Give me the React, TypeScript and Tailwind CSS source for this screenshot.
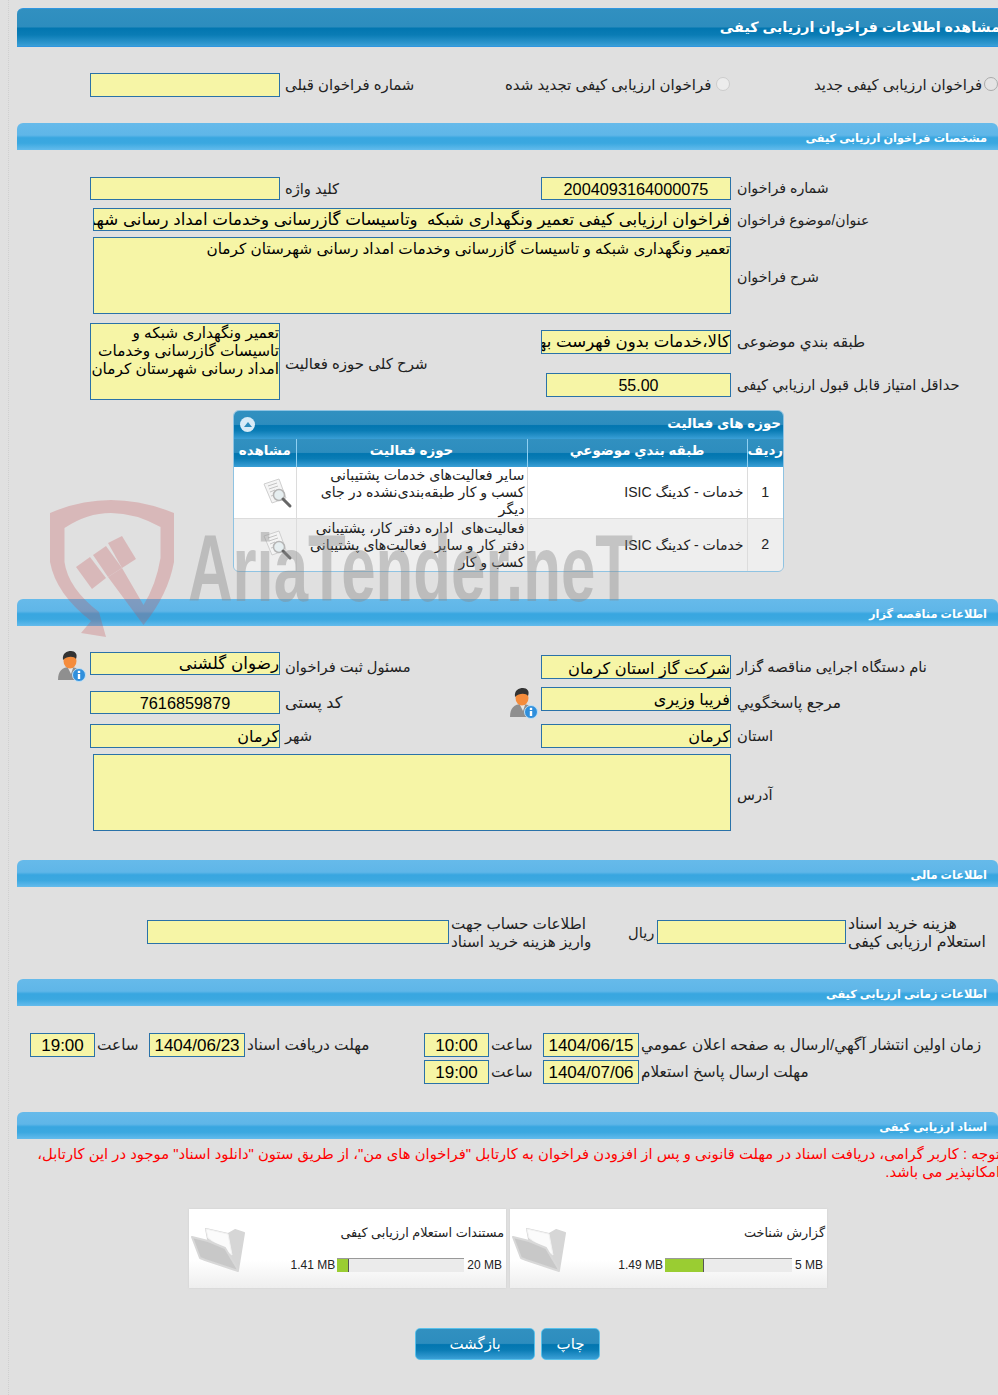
const font = "[font-family:'Liberation_Sans','DejaVu_Sans',sans-serif]";
const field = "bg-[#f6f5a6] border border-[#2a72a8] text-black";
const heavyBar = "bg-[linear-gradient(#3190c0_0%,#2d8dbe_48%,#0276b0_52%,#0a7cb5_70%,#3a9fd6_100%)]";
const lightBar = "bg-[linear-gradient(#66baea_0%,#5fb6e8_45%,#38a6e0_55%,#3ba8e0_75%,#63bbec_100%)]";

function Field({ className, children }: { className: string; children?: React.ReactNode }) {
  return (
    <div dir="rtl" className={`${field} overflow-hidden whitespace-nowrap leading-[22px] ${className}`}>
      {children}
    </div>
  );
}

function Label({ className, size = "text-[14.7px]", children }: { className: string; size?: string; children: React.ReactNode }) {
  return (
    <div dir="rtl" className={`text-left text-[#222] whitespace-nowrap ${size} ${className}`}>
      {children}
    </div>
  );
}

function SectionBar({ title, className }: { title: string; className: string }) {
  return (
    <div className={`ml-[17px] h-[27px] rounded-tl-[6px] rounded-tr-[6px] ${lightBar} flex items-center justify-end pr-[11px] ${className}`}>
      <span dir="rtl" className="text-[11.3px] font-bold text-white pt-[3px]">{title}</span>
    </div>
  );
}

function PersonIcon() {
  return (
    <svg width="30" height="32" viewBox="0 0 30 32">
      <path d="M2 30c0-9 4-13 12-13s11 4 11 13z" fill="#8f8f8f" />
      <path d="M12 18l3 6 2-6z" fill="#e8e8e8" />
      <ellipse cx="14" cy="11" rx="6.5" ry="7.5" fill="#f58c3c" />
      <path d="M7 10c-1-7 4-9 8-9s7 3 5 8c-2-3-9-3-13 1z" fill="#333" />
      <circle cx="23" cy="25" r="6.5" fill="#2f8fdc" stroke="#bfe0f7" strokeWidth="1" />
      <rect x="21.8" y="24" width="2.4" height="5" fill="#fff" />
      <rect x="21.8" y="20.8" width="2.4" height="2.2" fill="#fff" />
    </svg>
  );
}

function DocSearchIcon() {
  return (
    <svg width="32" height="32" viewBox="0 0 32 32">
      <path d="M2 7l15-5 7 19-14 5z" fill="#f4f4f4" stroke="#cfcfcf" />
      <path d="M6 9l9-3M7 12l9-3M8 15l5-2M9 19l4-1" stroke="#c4c4c4" strokeWidth="1" />
      <circle cx="17" cy="18" r="5.5" fill="#e6eef0" stroke="#b5b5b5" strokeWidth="1.5" />
      <path d="M21 22l7 7" stroke="#666" strokeWidth="3" strokeLinecap="round" />
    </svg>
  );
}

function FolderIcon() {
  return (
    <svg width="62" height="56" viewBox="0 0 62 56" className="blur-[0.5px]">
      <path d="M17 5l22 5 7-4 9 3-6 37L20 20z" fill="#d6d6d6" stroke="#d6d6d6" strokeLinejoin="round" strokeWidth="2" />
      <path d="M17 5l22 5 4 21-24-17z" fill="#fbfbfb" stroke="#f2f2f2" strokeLinejoin="round" strokeWidth="1" />
      <path d="M3 13l16 4 17 7 12 20 1 3-33-11-5-2z" fill="#c8c8c8" stroke="#d8d8d8" strokeLinejoin="round" strokeWidth="2" />
    </svg>
  );
}

function Quota({ used, total, percent, title }: { used: string; total: string; percent: string; title: string }) {
  return (
    <div className="w-[317px] h-[79px] flex bg-[linear-gradient(#fff_0%,#fff_65%,#eeeeee_100%)] shadow-[0_0_2px_#ccc]">
      <div className="w-[62px] shrink-0 pt-[15px]"><FolderIcon /></div>
      <div className="flex-1 pr-[2px]">
        <div dir="rtl" className="text-[12.8px] text-[#222] mt-[14px] h-[22px]">{title}</div>
        <div className="flex items-center justify-end mt-[11px] pr-[2px] text-[12px] text-[#222] gap-[2px]">
          <span>{used}</span>
          <div className="w-[127px] h-[14px] bg-[#ebebeb] border-t border-t-[#999]">
            <div className={`h-full bg-[#9acd32] border-r border-r-[#555] ${percent}`} />
          </div>
          <span className="ml-[1px]">{total}</span>
        </div>
      </div>
    </div>
  );
}

function Button({ className, children }: { className: string; children: string }) {
  return (
    <div className={`h-[32px] rounded-[5px] border border-[#58c0ea] ${heavyBar} text-white text-[15px] flex items-center justify-center ${className}`}>
      {children}
    </div>
  );
}

export default function App() {
  const rows = [
    ["1", "خدمات - کدینگ ISIC", "سایر فعالیت‌های خدمات پشتیبانی کسب و کار طبقه‌بندی‌نشده در جای دیگر", "bg-white h-[51px]"],
    ["2", "خدمات - کدینگ ISIC", "فعالیت‌های\u00a0 اداره دفتر کار، پشتیبانی دفتر کار و سایر\u00a0 فعالیت‌های پشتیبانی کسب و کار", "bg-[#eeeeee] h-[53px]"],
  ];

  return (
    <div className={`relative w-[998px] h-[1395px] overflow-hidden bg-[#e0e0e0] pt-[8px] text-[14px] ${font}`}>
      <div className="absolute left-[8px] top-0 bottom-0 border-l border-dotted border-[#cfcfcf]" />

      <div className={`relative ml-[17px] h-[39px] rounded-tl-[6px] border-y border-[#2f96e0] ${heavyBar} flex items-center justify-end`}>
        <span dir="rtl" className="text-[14.3px] font-bold text-white whitespace-nowrap -mr-[2px]">مشاهده اطلاعات فراخوان ارزیابی کیفی</span>
      </div>

      {/* نوع فراخوان */}
      <div className="relative mt-[26px] h-[24px] flex items-center">
        <Field className="ml-[90px] w-[190px] h-[24px]" />
        <Label size="text-[14.9px]" className="ml-[5px] w-[220px] pt-[1px]">شماره فراخوان قبلی</Label>
        <Label size="text-[15px]" className="w-[211px] pt-[1px]">فراخوان ارزیابی کیفی تجدید شده</Label>
        <span className="w-[14px] h-[14px] rounded-full bg-[#ececec] border border-[#ccc] -mt-[2px]" />
        <Label size="text-[14.9px]" className="ml-[84px] w-[170px] pt-[1px]">فراخوان ارزیابی کیفی جدید</Label>
        <span className="w-[14px] h-[14px] rounded-full bg-[#e4e4e4] border border-[#aaa] -mt-[2px]" />
      </div>

      <SectionBar title="مشخصات فراخوان ارزیابی کیفی" className="relative mt-[26px]" />

      <div className="relative mt-[27px] h-[23px] flex items-center">
        <Field className="ml-[90px] w-[190px] h-[23px]" />
        <Label className="ml-[5px] w-[256px] pt-[1px]">کلید واژه</Label>
        <Field className="w-[190px] h-[23px] text-center text-[16.3px]"><span dir="ltr">2004093164000075</span></Field>
        <Label size="text-[14.2px]" className="ml-[6px] pt-[1px]">شماره فراخوان</Label>
      </div>

      <div className="relative mt-[8px] h-[23px] flex items-center">
        <Field className="ml-[93px] w-[638px] h-[23px] text-[16.7px]">فراخوان ارزیابی کیفی تعمیر ونگهداری شبکه{"\u00a0 "}وتاسیسات گازرسانی وخدمات امداد رسانی شهرستان کرمان</Field>
        <Label size="text-[14px]" className="ml-[6px] pt-[1px]">عنوان/موضوع فراخوان</Label>
      </div>

      <div className="relative mt-[6px] h-[77px] flex items-center">
        <Field className="ml-[93px] w-[638px] h-[77px] text-[15.3px] leading-[19px]">تعمیر ونگهداری شبکه و تاسیسات گازرسانی وخدمات امداد رسانی شهرستان کرمان</Field>
        <Label size="text-[14.2px]" className="ml-[6px] pt-[5px]">شرح فراخوان</Label>
      </div>

      <div className="relative mt-[9px] h-[77px] flex">
        <div dir="rtl" className={`${field} ml-[90px] w-[190px] h-[77px] text-[15.3px] leading-[18px] text-right overflow-hidden`}>تعمیر ونگهداری شبکه و تاسیسات گازرسانی وخدمات امداد رسانی شهرستان کرمان</div>
        <Label size="text-[15px]" className="ml-[5px] w-[256px] leading-[82px]">شرح کلی حوزه فعالیت</Label>
        <div className="flex flex-col pt-[7px]">
          <div className="flex items-center h-[24px]">
            <Field className="w-[190px] h-[24px] text-[16.6px]">کالا،خدمات بدون فهرست بها</Field>
            <Label size="text-[15.2px]" className="ml-[6px]">طبقه بندي موضوعی</Label>
          </div>
          <div className="flex items-center h-[24px] mt-[19px]">
            <Field className="ml-[5px] w-[185px] h-[24px] pt-[1px] text-center text-[16px]"><span dir="ltr">55.00</span></Field>
            <Label className="ml-[6px]">حداقل امتیاز قابل قبول ارزیابي کیفی</Label>
          </div>
        </div>
      </div>

      {/* حوزه های فعالیت */}
      <div className="relative mt-[10px] ml-[233px] w-[551px] h-[162px] rounded-[6px] border border-[#8fc3e2] overflow-hidden">
        <div className={`h-[28px] ${heavyBar} flex items-center justify-between px-[6px] pb-[2px]`}>
          <span className="w-[15px] h-[15px] rounded-full bg-[#d8ebf7] flex items-center justify-center">
            <span className="border-x-[4px] border-x-transparent border-b-[5px] border-b-[#2d8dbe]" />
          </span>
          <span dir="rtl" className="text-[13.4px] font-bold text-white -mr-[4px]">حوزه های فعالیت</span>
        </div>
        <table dir="rtl" className="w-full table-fixed border-collapse text-[14.2px] text-[#222]">
          <thead>
            <tr className={`h-[28px] ${heavyBar} text-white text-[13.4px] font-bold`}>
              <th className="w-[36px] border-l border-[#8fd0f2] font-bold pb-[3px]">ردیف</th>
              <th className="w-[220px] border-l border-[#8fd0f2] font-bold pb-[3px]">طبقه بندي موضوعي</th>
              <th className="w-[231px] border-l border-[#8fd0f2] font-bold pb-[3px]">حوزه فعالیت</th>
              <th className="font-bold pb-[3px]">مشاهده</th>
            </tr>
          </thead>
          <tbody>
            {rows.map((r) => (
              <tr key={r[0]} className={`${r[3]} border-b border-[#dcdcdc]`}>
                <td className="text-center border-l border-[#dcdcdc]">{r[0]}</td>
                <td className="pr-[3px] border-l border-[#dcdcdc] text-[14px]">{r[1]}</td>
                <td className="px-[2px] leading-[17px] border-l border-[#dcdcdc]">{r[2]}</td>
                <td><div className="flex justify-end pl-[28px]"><DocSearchIcon /></div></td>
              </tr>
            ))}
          </tbody>
        </table>
      </div>

      <SectionBar title="اطلاعات مناقصه گزار" className="relative mt-[27px]" />

      <div className="relative mt-[26px] h-[26px] flex">
        <div className="ml-[56px] w-[34px] -mt-[2px]"><PersonIcon /></div>
        <Field className="w-[190px] h-[23px] text-[16.8px]">رضوان گلشنی</Field>
        <Label className="ml-[5px] w-[256px] leading-[30px]">مسئول ثبت فراخوان</Label>
        <Field className="w-[190px] h-[24px] mt-[3px] pt-[1px] text-[16.2px]">شرکت گاز استان کرمان</Field>
        <Label className="ml-[6px] leading-[30px]">نام دستگاه اجرایی مناقصه گزار</Label>
      </div>

      <div className="relative mt-[9px] h-[28px] flex">
        <Field className="ml-[90px] w-[190px] h-[23px] mt-[4px] text-center text-[16.3px]"><span dir="ltr">7616859879</span></Field>
        <Label size="text-[16px]" className="ml-[5px] w-[223px] leading-[32px]">کد پستی</Label>
        <div className="w-[33px]"><PersonIcon /></div>
        <Field className="w-[190px] h-[24px] pt-[1px] text-[16px]">فریبا وزیری</Field>
        <Label size="text-[15.4px]" className="ml-[6px] leading-[32px]">مرجع پاسخگویي</Label>
      </div>

      <div className="relative mt-[9px] h-[24px] flex items-center">
        <Field className="ml-[90px] w-[190px] h-[24px] pt-[1px] text-[16px]">کرمان</Field>
        <Label className="ml-[5px] w-[256px]">شهر</Label>
        <Field className="w-[190px] h-[24px] pt-[1px] text-[16px]">کرمان</Field>
        <Label className="ml-[6px]">استان</Label>
      </div>

      <div className="relative mt-[6px] h-[77px] flex items-center">
        <Field className="ml-[93px] w-[638px] h-[77px]" />
        <Label className="ml-[6px] pt-[5px]">آدرس</Label>
      </div>

      <SectionBar title="اطلاعات مالی" className="relative mt-[29px]" />

      <div className="relative mt-[27px] h-[36px] flex items-center">
        <Field className="ml-[147px] w-[302px] h-[24px]" />
        <Label size="text-[15.2px]" className="ml-[2px] w-[177px] pt-[2px] leading-[18px]">اطلاعات حساب جهت<br />واریز هزینه خرید اسناد</Label>
        <Label className="w-[29px] pt-[2px]">ریال</Label>
        <Field className="w-[189px] h-[24px]" />
        <Label size="text-[15.8px]" className="ml-[2px] pt-[2px] leading-[18px]">هزینه خرید اسناد<br />استعلام ارزیابی کیفی</Label>
      </div>

      <SectionBar title="اطلاعات زمانی ارزیابی کیفی" className="relative mt-[29px]" />

      <div className="relative mt-[27px] h-[24px] flex items-center">
        <Field className="ml-[30px] w-[65px] h-[24px] pt-[1px] text-center text-[17px]"><span dir="ltr">19:00</span></Field>
        <Label size="text-[15.3px]" className="ml-[2px] w-[52px] pt-[1px]">ساعت</Label>
        <Field className="w-[96px] h-[24px] pt-[1px] text-center text-[17px]"><span dir="ltr">1404/06/23</span></Field>
        <Label size="text-[15.3px]" className="ml-[2px] w-[177px] pt-[1px]">مهلت دریافت اسناد</Label>
        <Field className="w-[65px] h-[24px] pt-[1px] text-center text-[17px]"><span dir="ltr">10:00</span></Field>
        <Label size="text-[15.3px]" className="ml-[2px] w-[52px] pt-[1px]">ساعت</Label>
        <Field className="w-[96px] h-[24px] pt-[1px] text-center text-[17px]"><span dir="ltr">1404/06/15</span></Field>
        <Label size="text-[15.3px]" className="ml-[2px] pt-[1px]">زمان اولین انتشار آگهي/ارسال به صفحه اعلان عمومي</Label>
      </div>

      <div className="relative mt-[3px] h-[24px] flex items-center">
        <Field className="ml-[424px] w-[65px] h-[24px] pt-[1px] text-center text-[17px]"><span dir="ltr">19:00</span></Field>
        <Label size="text-[15.3px]" className="ml-[2px] w-[52px] pt-[1px]">ساعت</Label>
        <Field className="w-[96px] h-[24px] pt-[1px] text-center text-[17px]"><span dir="ltr">1404/07/06</span></Field>
        <Label size="text-[15.3px]" className="ml-[2px] pt-[1px]">مهلت ارسال پاسخ استعلام</Label>
      </div>

      <SectionBar title="اسناد ارزیابی کیفی" className="relative mt-[28px]" />

      <div dir="rtl" className="relative mt-[6px] h-[36px] ml-[17px] -mr-[2px] text-[14.8px] leading-[18px] text-[#f00]">
        توجه : کاربر گرامی، دریافت اسناد در مهلت قانونی و پس از افزودن فراخوان به کارتابل "فراخوان های من"، از طریق ستون "دانلود اسناد" موجود در این کارتابل، امکانپذیر می باشد.
      </div>

      <div className="relative mt-[28px] ml-[189px] flex gap-[4px]">
        <Quota title="مستندات استعلام ارزیابی کیفی" used="1.41 MB" total="20 MB" percent="w-[9.4%]" />
        <Quota title="گزارش شناخت" used="1.49 MB" total="5 MB" percent="w-[30.7%]" />
      </div>

      <div className="relative mt-[40px] ml-[415px] flex gap-[6px]">
        <Button className="w-[120px]">بازگشت</Button>
        <Button className="w-[59px]">چاپ</Button>
      </div>

      {/* واترمارک */}
      <div className="absolute left-[50px] top-[500px] pointer-events-none">
        <svg width="128" height="140" viewBox="0 0 128 140" className="opacity-[0.265]">
          <g fill="#c64d51">
            <path d="M0 13Q30 0 61 0T124 13V62Q118 95 93.5 125L58 77 72 68 93.5 105Q106 85 110.5 58V27Q85 13 61 13T14.5 28V62Q18 88 49 112L46 106 49 112 56 137 31 133 41 121Q6 94 0 62z" />
            <path d="M26 67 40 57 56 78 42 89z" />
            <path d="M43 55 56 46 72 68 58 77z" />
            <path d="M58 43 72 36 86 59 72 68z" />
          </g>
        </svg>
      </div>
      <div className="absolute left-[188px] top-[513px] pointer-events-none opacity-[0.4] text-[#888] text-[95px] leading-[110px] font-bold whitespace-nowrap origin-left scale-x-[0.65] [font-family:'Liberation_Sans',sans-serif]">
        AriaTender.neT
      </div>
    </div>
  );
}
